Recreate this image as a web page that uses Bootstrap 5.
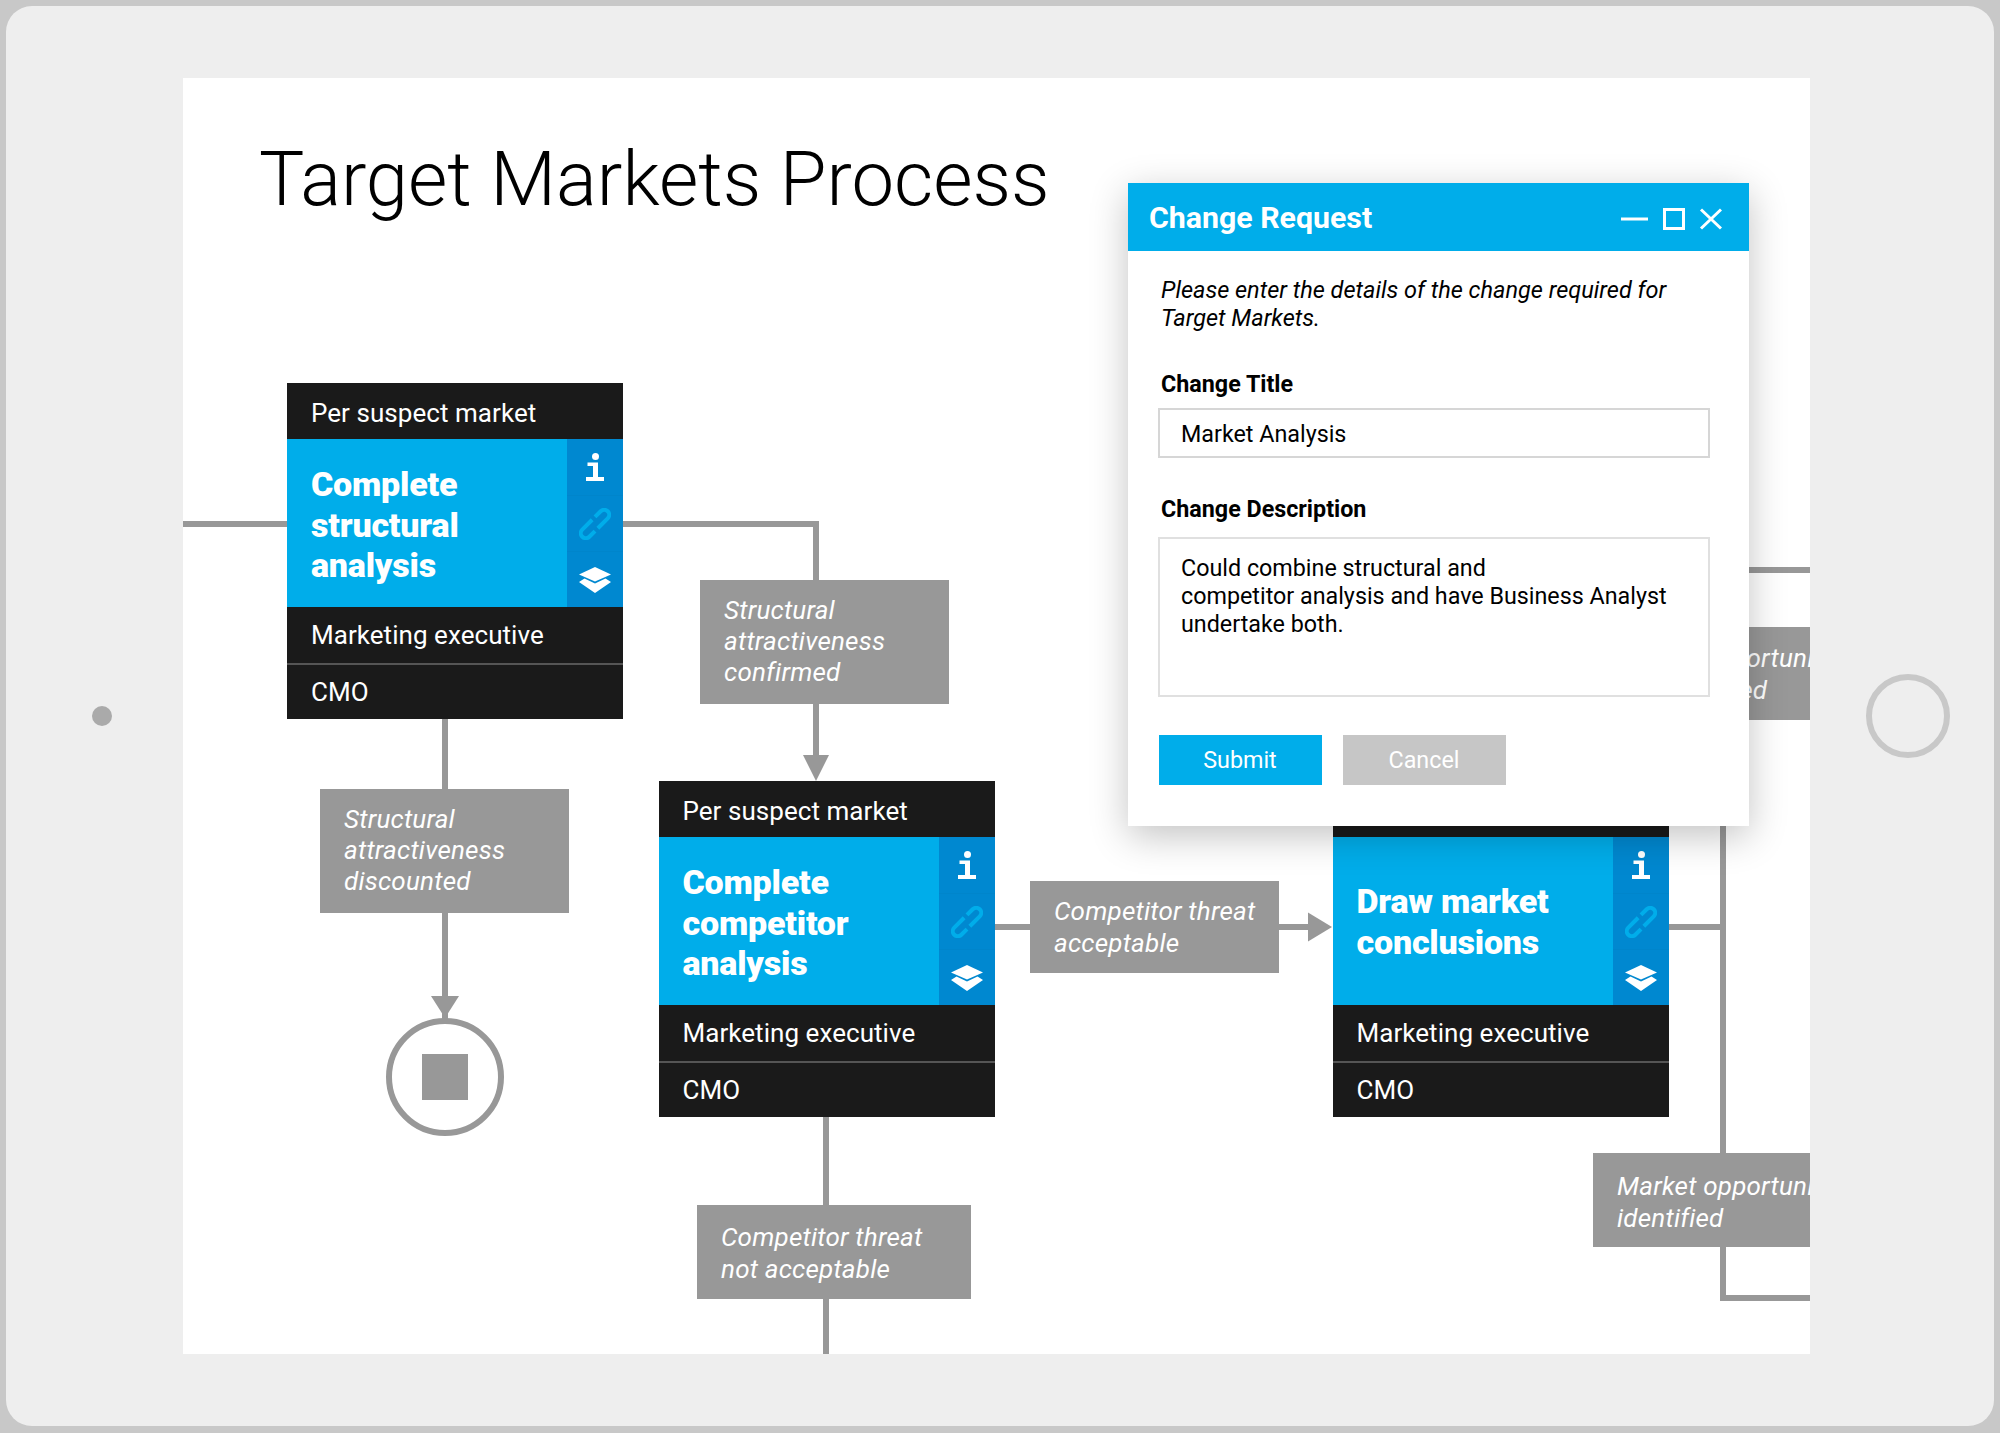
<!DOCTYPE html>
<html lang="en">
<head>
<meta charset="utf-8">
<title>Target Markets Process</title>
<link href="https://cdn.jsdelivr.net/npm/bootstrap@5.3.0/dist/css/bootstrap.min.css" rel="stylesheet">
<style>
html,body{height:100%;margin:0}
body{background:#c8c8c8;font-family:Roboto,"Liberation Sans",sans-serif;overflow:hidden}
.device{position:absolute;left:6px;top:6px;width:1988px;height:1420px;background:#eee;border-radius:26px}
.cam-dot{width:20px;height:20px;border-radius:50%;background:#aaa;position:absolute;left:86px;top:699.5px}
.home-btn{width:84px;height:84px;border-radius:50%;border:6px solid #c8c8c8;position:absolute;left:1860px;top:667.5px}
.screen{position:absolute;left:177px;top:72px;width:1627px;height:1276px;background:#fff;overflow:hidden}
.wires{position:absolute;left:0;top:0}
.page-title{position:absolute;left:76px;top:54px;margin:0;font-size:76px;line-height:94px;font-weight:300;color:#000;white-space:nowrap}
.proc{position:absolute;width:336px;height:336px;background:#1a1a1a;color:#fff;font-size:26px;letter-spacing:.05px}
.proc-row{height:56px;padding-left:24px;padding-top:1px}
.proc-row:first-child{padding-top:4px}
.proc-row:last-child{padding-top:0}
.proc-row+.proc-row{border-top:2px solid #555}
.proc-main{height:168px;background:#00adea}
.proc-name{padding:4px 0 0 24px;font-size:34px;line-height:40.5px;font-weight:900;letter-spacing:-.2px;flex:1}
.p3 .proc-name{padding-top:1px}
.proc-side{width:56px;background:#0088d0}
.proc-side>div{height:56px}
.proc-side>div+div{border-top:1px solid #0085cb}
.p1{left:104px;top:305px}.p2{left:475.5px;top:703px}.p3{left:1149.5px;top:703px}
.flag{position:absolute;background:#989898;color:#fff;font-style:italic;font-size:26px;line-height:31px;padding:15px 24px;letter-spacing:.2px}
.f1{left:137px;top:711px;width:249px;height:124px}
.f2{left:517px;top:502px;width:249px;height:124px}
.f3{left:514px;top:1127px;width:274px;height:94px;padding-top:17px;line-height:31.5px}
.f4{left:847px;top:803px;width:249px;height:92px;line-height:31.5px}
.f5{left:1410px;top:1075px;width:300px;height:94px;padding-top:18px;line-height:31.5px}
.f6{left:1410px;top:549px;width:300px;height:93px;padding-top:16px;line-height:31.5px}
.flag-text{white-space:nowrap}
.dlg{position:absolute;left:945px;top:105px;width:621px;height:643px;background:#fff;box-shadow:0 10px 36px rgba(0,0,0,.24)}
.dlg-head{height:68px;background:#00adea;color:#fff;padding:0 27px 0 21px}
.dlg-title{font-size:30.3px;font-weight:700;padding-top:2px}
.dlg-body{padding:25px 30px 0 33px;font-size:23.3px;line-height:28px;color:#000}
.dlg-note{font-style:italic;font-size:23.5px;margin:0 0 38px}
.dlg-label{font-weight:700;font-size:23.3px;line-height:28px;margin:0 0 10px;display:block;color:#000}
.dlg-label-far{margin-bottom:14px}
.dlg-input{border:2px solid #d6d6d6;border-radius:0;font-size:23.3px;line-height:28px;padding:10px 21px 8px;color:#000;height:50px;box-shadow:none;width:552px;margin-left:-3px}
.dlg-area{height:160px;padding:15px 21px;resize:none;margin-bottom:38px;border-color:#e0e0e0}
.dlg-gap{margin-bottom:37px}
.act-row{gap:21px;margin-left:-2.5px}
.act{width:163px;height:50px;border:0;border-radius:0;color:#fff;font-size:23.3px;padding:0}
.act-blue{background:#00adea}
.act-grey{background:#c6c6c6}
</style>
</head>
<body>
<div class="device">
  <div class="cam-dot"></div>
  <div class="home-btn"></div>
  <div class="screen">
    <svg class="wires" width="1627" height="1276" viewBox="0 0 1627 1276" fill="#989898">
      <rect x="0" y="443" width="110" height="6"/>
      <rect x="436" y="443" width="200" height="6"/>
      <rect x="630" y="443" width="6" height="240"/>
      <polygon points="620,677 646,677 633,703"/>
      <rect x="259" y="640" width="6" height="320"/>
      <polygon points="248,918 276,918 262,940"/>
      <circle cx="262" cy="999" r="56" fill="#fff" stroke="#989898" stroke-width="6"/>
      <rect x="239" y="976" width="46" height="46"/>
      <rect x="640" y="1035" width="6" height="241"/>
      <rect x="810" y="846" width="40" height="6"/>
      <rect x="1090" y="846" width="40" height="6"/>
      <polygon points="1125,834.500 1149,849 1125,863.500"/>
      <rect x="1480" y="846" width="60" height="6"/>
      <rect x="1537" y="740" width="6" height="483"/>
      <rect x="1537" y="1217" width="90" height="6"/>
      <rect x="1540" y="489" width="87" height="6"/>
    </svg>
    <h1 class="page-title">Target Markets Process</h1>

    <div class="proc p1 d-flex flex-column">
      <div class="proc-row d-flex align-items-center">Per suspect market</div>
      <div class="proc-main d-flex">
        <div class="proc-name d-flex align-items-center">Complete<br>structural<br>analysis</div>
        <div class="proc-side d-flex flex-column">
          <div class="d-flex align-items-center justify-content-center"><svg width="18" height="28" viewBox="0 0 18 28" fill="#fff"><circle cx="9.500" cy="3.500" r="3.500"/><path d="M1.500 9.500H12V24H18V28H0V24H7V13H1.500Z"/></svg></div>
          <div class="d-flex align-items-center justify-content-center"><svg width="32" height="32" viewBox="0 0 32 32" fill="none" stroke="#00adea" stroke-width="4"><g transform="rotate(-45 16 16)"><path d="M17 11H3a5 5 0 0 0 0 10H11"/><path d="M15 21H29a5 5 0 0 0 0-10H21"/></g></svg></div>
          <div class="d-flex align-items-center justify-content-center"><svg width="32" height="26" viewBox="0 0 32 26" fill="#fff"><path d="M16 0 32 7.500 16 14.500 0 7.500Z"/><path d="M5.500 11.500 16 16.500 26.500 11.500 32 15 16 26 0 15Z"/></svg></div>
        </div>
      </div>
      <div class="proc-row d-flex align-items-center">Marketing executive</div>
      <div class="proc-row d-flex align-items-center">CMO</div>
    </div>

    <div class="proc p2 d-flex flex-column">
      <div class="proc-row d-flex align-items-center">Per suspect market</div>
      <div class="proc-main d-flex">
        <div class="proc-name d-flex align-items-center">Complete<br>competitor<br>analysis</div>
        <div class="proc-side d-flex flex-column">
          <div class="d-flex align-items-center justify-content-center"><svg width="18" height="28" viewBox="0 0 18 28" fill="#fff"><circle cx="9.500" cy="3.500" r="3.500"/><path d="M1.500 9.500H12V24H18V28H0V24H7V13H1.500Z"/></svg></div>
          <div class="d-flex align-items-center justify-content-center"><svg width="32" height="32" viewBox="0 0 32 32" fill="none" stroke="#00adea" stroke-width="4"><g transform="rotate(-45 16 16)"><path d="M17 11H3a5 5 0 0 0 0 10H11"/><path d="M15 21H29a5 5 0 0 0 0-10H21"/></g></svg></div>
          <div class="d-flex align-items-center justify-content-center"><svg width="32" height="26" viewBox="0 0 32 26" fill="#fff"><path d="M16 0 32 7.500 16 14.500 0 7.500Z"/><path d="M5.500 11.500 16 16.500 26.500 11.500 32 15 16 26 0 15Z"/></svg></div>
        </div>
      </div>
      <div class="proc-row d-flex align-items-center">Marketing executive</div>
      <div class="proc-row d-flex align-items-center">CMO</div>
    </div>

    <div class="proc p3 d-flex flex-column">
      <div class="proc-row d-flex align-items-center">Per suspect market</div>
      <div class="proc-main d-flex">
        <div class="proc-name d-flex align-items-center">Draw market<br>conclusions</div>
        <div class="proc-side d-flex flex-column">
          <div class="d-flex align-items-center justify-content-center"><svg width="18" height="28" viewBox="0 0 18 28" fill="#fff"><circle cx="9.500" cy="3.500" r="3.500"/><path d="M1.500 9.500H12V24H18V28H0V24H7V13H1.500Z"/></svg></div>
          <div class="d-flex align-items-center justify-content-center"><svg width="32" height="32" viewBox="0 0 32 32" fill="none" stroke="#00adea" stroke-width="4"><g transform="rotate(-45 16 16)"><path d="M17 11H3a5 5 0 0 0 0 10H11"/><path d="M15 21H29a5 5 0 0 0 0-10H21"/></g></svg></div>
          <div class="d-flex align-items-center justify-content-center"><svg width="32" height="26" viewBox="0 0 32 26" fill="#fff"><path d="M16 0 32 7.500 16 14.500 0 7.500Z"/><path d="M5.500 11.500 16 16.500 26.500 11.500 32 15 16 26 0 15Z"/></svg></div>
        </div>
      </div>
      <div class="proc-row d-flex align-items-center">Marketing executive</div>
      <div class="proc-row d-flex align-items-center">CMO</div>
    </div>

    <div class="flag f1">Structural<br>attractiveness<br>discounted</div>
    <div class="flag f2">Structural<br>attractiveness<br>confirmed</div>
    <div class="flag f3 flag-text">Competitor threat<br>not acceptable</div>
    <div class="flag f4 flag-text">Competitor threat<br>acceptable</div>
    <div class="flag f5 flag-text">Market opportunity<br>identified</div>
    <div class="flag f6 flag-text">Market opportunity<br>not identified</div>

    <div class="dlg">
      <div class="dlg-head d-flex align-items-center justify-content-between">
        <span class="dlg-title">Change Request</span>
        <svg width="101" height="28" viewBox="0 0 101 28" fill="none" stroke="#fff" stroke-width="3"><path d="M0 16H27"/><rect x="43.500" y="6.500" width="19" height="19"/><path d="M80 6.500 100 25.500M100 6.500 80 25.500"/></svg>
      </div>
      <div class="dlg-body">
        <p class="dlg-note">Please enter the details of the change required for<br>Target Markets.</p>
        <form>
          <label class="dlg-label form-label" for="ct">Change Title</label>
          <input id="ct" class="form-control dlg-input dlg-gap" value="Market Analysis">
          <label class="dlg-label dlg-label-far form-label" for="cd">Change Description</label>
          <textarea id="cd" class="form-control dlg-input dlg-area">Could combine structural and
competitor analysis and have Business Analyst undertake both.</textarea>
          <div class="d-flex act-row">
            <button type="button" class="btn act act-blue">Submit</button>
            <button type="button" class="btn act act-grey">Cancel</button>
          </div>
        </form>
      </div>
    </div>
  </div>
</div>
<script src="https://cdn.jsdelivr.net/npm/bootstrap@5.3.0/dist/js/bootstrap.bundle.min.js"></script>
</body>
</html>
